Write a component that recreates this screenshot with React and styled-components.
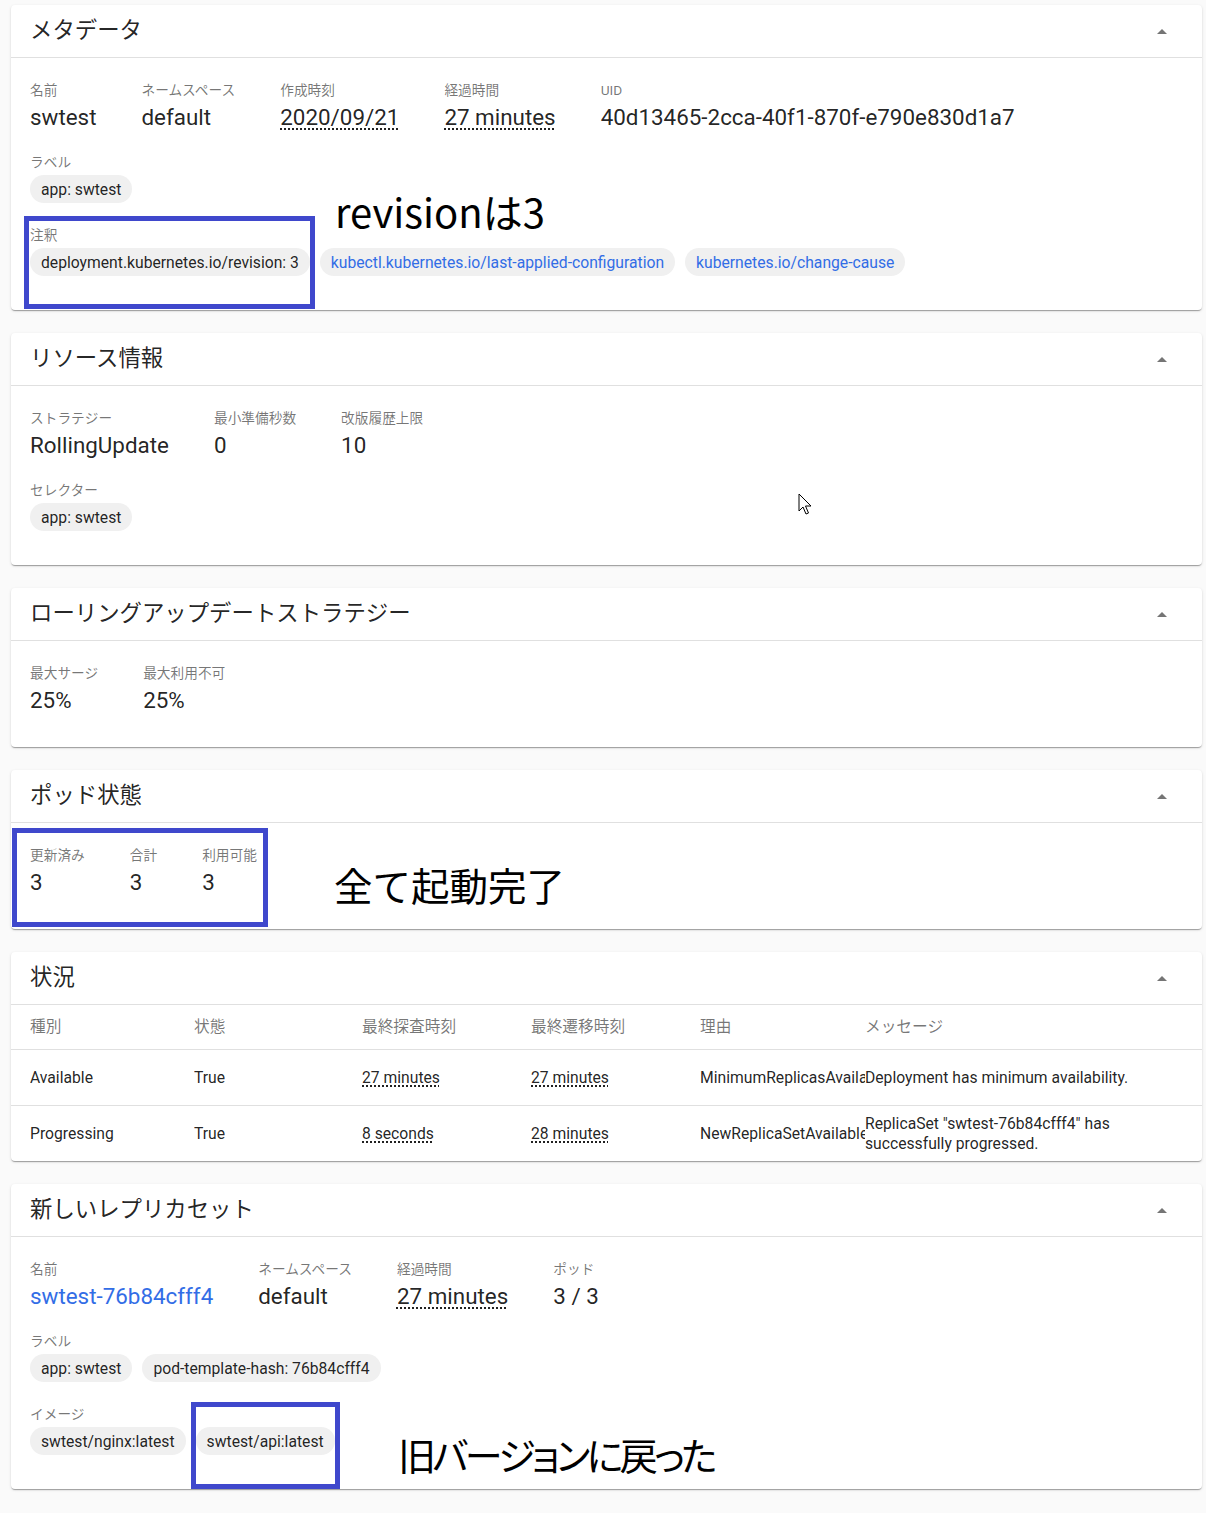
import styled, { createGlobalStyle } from "styled-components";

const GlobalStyle = createGlobalStyle`
    body {
        margin: 0;
        background: #fafafa;
        font-family: Roboto, "Noto Sans CJK JP", sans-serif;
        color: rgba(0, 0, 0, 0.87);
    }
`;

const Page = styled.div`
    position: relative;
    display: flex;
    flex-direction: column;
    gap: 23px;
    padding: 5px 4px 24px 11px;
`;

const Card = styled.div`
    background: #fff;
    border-radius: 4px;
    box-shadow: 0 2px 1px -1px rgba(0, 0, 0, 0.2), 0 1px 1px 0 rgba(0, 0, 0, 0.14),
        0 1px 3px 0 rgba(0, 0, 0, 0.12);
`;

const CardHeader = styled.div`
    height: 52px;
    display: flex;
    align-items: center;
    justify-content: space-between;
    padding: 0 35px 0 19px;
    border-bottom: 1px solid #e0e0e0;
`;

const Title = styled.h2`
    margin: 0 0 6px;
    font-size: 22.4px;
    font-weight: 400;
    color: rgba(0, 0, 0, 0.87);
`;

const CardBody = styled.div`
    padding: 23px 19px 11px;
`;

const Section = styled.div`
    margin-bottom: 22px;
`;

const Fields = styled.div`
    display: flex;
    gap: 45px;
`;

const Label = styled.div`
    font-size: 13.7px;
    line-height: 18px;
    color: rgba(0, 0, 0, 0.54);
`;

const Value = styled.div`
    margin-top: 4px;
    font-size: 22.4px;
    line-height: 28px;
    white-space: nowrap;
    color: ${(p) => (p.$link ? "#326de6" : "rgba(0, 0, 0, 0.87)")};
`;

const Dotted = styled.span`
    text-decoration: underline dotted;
    text-decoration-thickness: 2px;
    text-underline-offset: 3px;
`;

const ChipList = styled.div`
    display: flex;
    gap: 10px;
    margin-top: 4px;
    padding-bottom: 1px;
`;

const Chip = styled.span`
    display: inline-flex;
    align-items: center;
    height: 28px;
    padding: 0 11px;
    border-radius: 14px;
    background: #f0f0f0;
    font-size: 15.7px;
    white-space: nowrap;
    color: ${(p) => (p.$link ? "#326de6" : "rgba(0, 0, 0, 0.87)")};
`;

const TableRow = styled.div`
    display: grid;
    grid-template-columns: 164px 168px 169px 169px 165px 1fr;
    align-items: center;
    height: ${(p) => (p.$head ? "44px" : "55px")};
    padding: 0 19px;
    border-top: ${(p) => (p.$head ? "none" : "1px solid #e0e0e0")};
    font-size: 15.7px;
    line-height: 20px;
    color: ${(p) => (p.$head ? "rgba(0, 0, 0, 0.54)" : "rgba(0, 0, 0, 0.87)")};
`;

const Cell = styled.div`
    overflow: hidden;
    white-space: ${(p) => (p.$wrap ? "normal" : "nowrap")};
`;

const MarkBox = styled.div`
    position: absolute;
    box-sizing: border-box;
    border: 5px solid #3f48cc;
    pointer-events: none;
`;

const Note = styled.div`
    position: absolute;
    font-family: "Noto Sans CJK JP", sans-serif;
    font-feature-settings: ${(p) => (p.$tight ? '"palt"' : "normal")};
    font-size: ${(p) => p.$size}px;
    letter-spacing: ${(p) => p.$spacing || 0}px;
    line-height: 48px;
    color: #000;
    white-space: nowrap;
`;

const Pointer = styled.svg`
    position: absolute;
    left: 798px;
    top: 493px;
`;

const CollapseIcon = () => (
    <svg width="10" height="5" viewBox="0 0 10 5">
        <path d="M0 5 L5 0 L10 5 Z" fill="#757575" />
    </svg>
);

const Field = ({ label, children, link }) => (
    <div>
        <Label>{label}</Label>
        <Value $link={link}>{children}</Value>
    </div>
);

const Panel = ({ title, children }) => (
    <Card>
        <CardHeader>
            <Title>{title}</Title>
            <CollapseIcon />
        </CardHeader>
        {children}
    </Card>
);

const conditions = [
    ["Available", "True", "27 minutes", "27 minutes", "MinimumReplicasAvailable", "Deployment has minimum availability."],
    ["Progressing", "True", "8 seconds", "28 minutes", "NewReplicaSetAvailable", 'ReplicaSet "swtest-76b84cfff4" has successfully progressed.'],
];

export default function App() {
    return (
        <>
            <GlobalStyle />
            <Page>
                <Panel title="メタデータ">
                    <CardBody>
                        <Section>
                            <Fields>
                                <Field label="名前">swtest</Field>
                                <Field label="ネームスペース">default</Field>
                                <Field label="作成時刻"><Dotted>2020/09/21</Dotted></Field>
                                <Field label="経過時間"><Dotted>27 minutes</Dotted></Field>
                                <Field label="UID">40d13465-2cca-40f1-870f-e790e830d1a7</Field>
                            </Fields>
                        </Section>
                        <Section>
                            <Label>ラベル</Label>
                            <ChipList>
                                <Chip>app: swtest</Chip>
                            </ChipList>
                        </Section>
                        <Section>
                            <Label>注釈</Label>
                            <ChipList>
                                <Chip>deployment.kubernetes.io/revision: 3</Chip>
                                <Chip $link>kubectl.kubernetes.io/last-applied-configuration</Chip>
                                <Chip $link>kubernetes.io/change-cause</Chip>
                            </ChipList>
                        </Section>
                    </CardBody>
                </Panel>

                <Panel title="リソース情報">
                    <CardBody>
                        <Section>
                            <Fields>
                                <Field label="ストラテジー">RollingUpdate</Field>
                                <Field label="最小準備秒数">0</Field>
                                <Field label="改版履歴上限">10</Field>
                            </Fields>
                        </Section>
                        <Section>
                            <Label>セレクター</Label>
                            <ChipList>
                                <Chip>app: swtest</Chip>
                            </ChipList>
                        </Section>
                    </CardBody>
                </Panel>

                <Panel title="ローリングアップデートストラテジー">
                    <CardBody>
                        <Section>
                            <Fields>
                                <Field label="最大サージ">25%</Field>
                                <Field label="最大利用不可">25%</Field>
                            </Fields>
                        </Section>
                    </CardBody>
                </Panel>

                <Panel title="ポッド状態">
                    <CardBody>
                        <Section>
                            <Fields>
                                <Field label="更新済み">3</Field>
                                <Field label="合計">3</Field>
                                <Field label="利用可能">3</Field>
                            </Fields>
                        </Section>
                    </CardBody>
                </Panel>

                <Panel title="状況">
                    <TableRow $head>
                        <Cell>種別</Cell>
                        <Cell>状態</Cell>
                        <Cell>最終探査時刻</Cell>
                        <Cell>最終遷移時刻</Cell>
                        <Cell>理由</Cell>
                        <Cell>メッセージ</Cell>
                    </TableRow>
                    {conditions.map((c) => (
                        <TableRow key={c[0]}>
                            <Cell>{c[0]}</Cell>
                            <Cell>{c[1]}</Cell>
                            <Cell><Dotted>{c[2]}</Dotted></Cell>
                            <Cell><Dotted>{c[3]}</Dotted></Cell>
                            <Cell>{c[4]}</Cell>
                            <Cell $wrap>{c[5]}</Cell>
                        </TableRow>
                    ))}
                </Panel>

                <Panel title="新しいレプリカセット">
                    <CardBody>
                        <Section>
                            <Fields>
                                <Field label="名前" link>swtest-76b84cfff4</Field>
                                <Field label="ネームスペース">default</Field>
                                <Field label="経過時間"><Dotted>27 minutes</Dotted></Field>
                                <Field label="ポッド">3 / 3</Field>
                            </Fields>
                        </Section>
                        <Section>
                            <Label>ラベル</Label>
                            <ChipList>
                                <Chip>app: swtest</Chip>
                                <Chip>pod-template-hash: 76b84cfff4</Chip>
                            </ChipList>
                        </Section>
                        <Section>
                            <Label>イメージ</Label>
                            <ChipList>
                                <Chip>swtest/nginx:latest</Chip>
                                <Chip>swtest/api:latest</Chip>
                            </ChipList>
                        </Section>
                    </CardBody>
                </Panel>

                <MarkBox style={{ left: 24, top: 216, width: 291, height: 93 }} />
                <Note $size={40} style={{ left: 335, top: 187 }}>revisionは3</Note>
                <MarkBox style={{ left: 12, top: 828, width: 256, height: 99 }} />
                <Note $size={38.5} style={{ left: 334, top: 860 }}>全て起動完了</Note>
                <MarkBox style={{ left: 191, top: 1402, width: 149, height: 87 }} />
                <Note $size={38} $tight $spacing={-3.5} style={{ left: 398, top: 1430 }}>旧バージョンに戻った</Note>

                <Pointer width="14" height="24" viewBox="0 0 14 24">
                    <path d="M1 1 L1 18 L5 14 L8 21 L10.5 20 L7.5 13 L13 13 Z" fill="#fff" stroke="#000" strokeWidth="1" strokeLinejoin="round" />
                </Pointer>
            </Page>
        </>
    );
}
